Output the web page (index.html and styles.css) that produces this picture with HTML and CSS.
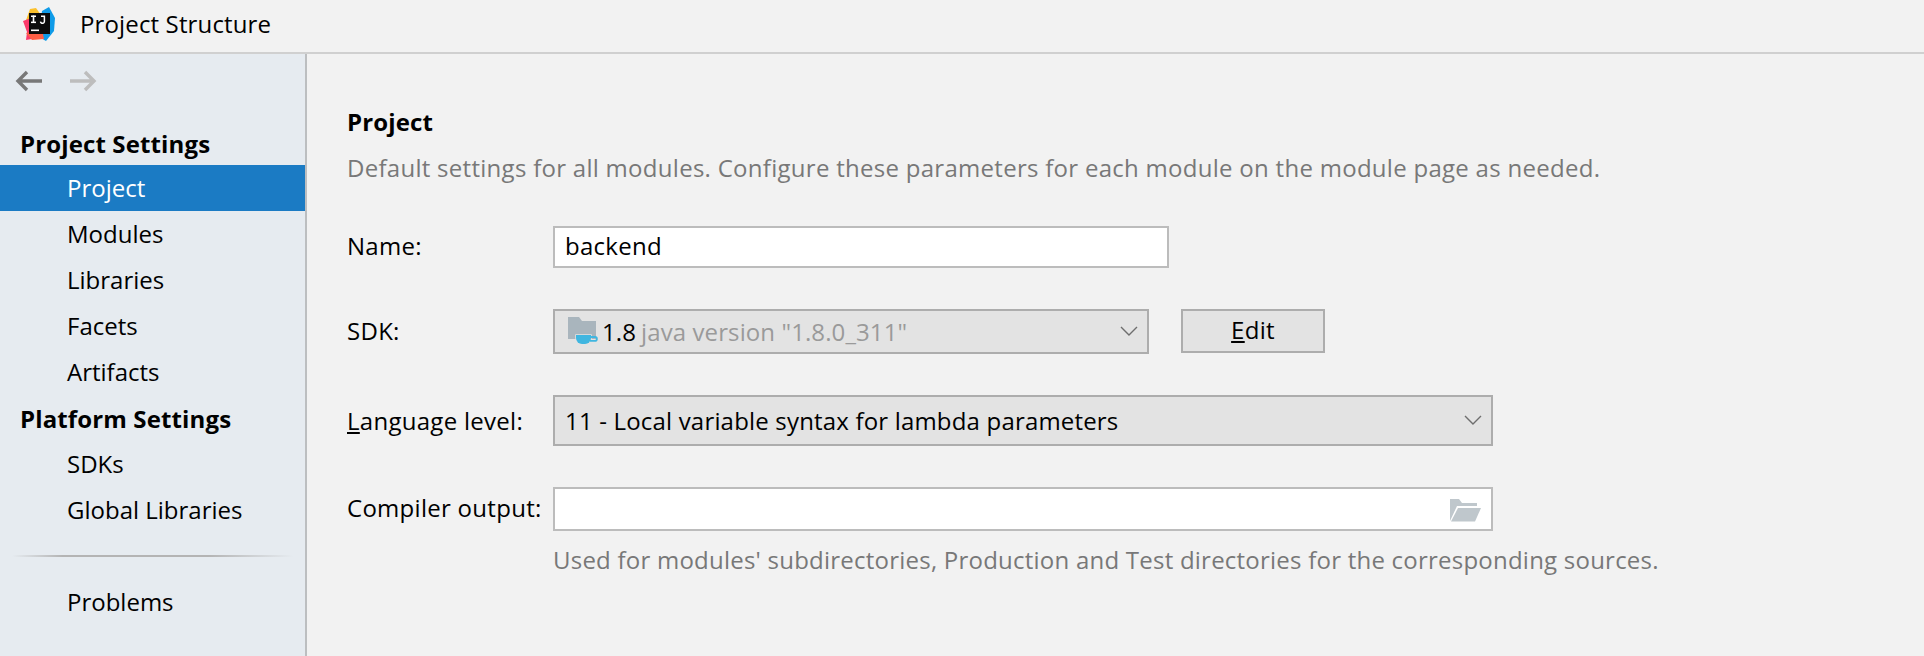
FILE: index.html
```html
<!DOCTYPE html>
<html lang="en">
<head>
<meta charset="utf-8">
<title>Project Structure</title>
<link rel="stylesheet" href="styles.css">
</head>
<body>
<div class="window">
  <header class="titlebar">
    <svg class="logo" width="34" height="34" viewBox="0 0 34 34">
      <polygon points="3,16 8,2 14,1 19,8 12,20" fill="#fcc12d"/>
      <polygon points="1,14 9,11 12,24 10,32 4,33 5,25" fill="#fb3a6b"/>
      <polygon points="20,4 27,0 33,11 32,24 24,34 17,30" fill="#0f9be8"/>
      <polygon points="4,26 20,22 22,32 10,33" fill="#fe5f45"/>
      <rect x="7" y="6" width="21" height="21" fill="#0c0c0c"/>
      <rect x="9" y="22.500" width="8" height="1.600" fill="#fff"/>
      <rect x="9" y="8.500" width="5" height="1.500" fill="#fff"/>
      <rect x="10.700" y="8.500" width="1.600" height="7.500" fill="#fff"/>
      <rect x="9" y="14.600" width="5" height="1.500" fill="#fff"/>
      <path d="M19 9.200h3.400v5a1.900 1.900 0 0 1-3.900.4" stroke="#fff" stroke-width="1.500" fill="none"/>
    </svg>
    <span class="title">Project Structure</span>
  </header>
  <div class="body">
    <nav class="sidebar">
      <div class="arrows">
        <svg width="28" height="22" viewBox="0 0 28 22" fill="none" stroke="#787878" stroke-width="3.400"><path d="M27 11H3M12 2 3 11l9 9"/></svg>
        <svg width="28" height="22" viewBox="0 0 28 22" fill="none" stroke="#bdbdbd" stroke-width="3.400"><path d="M1 11h24M16 2l9 9-9 9"/></svg>
      </div>
      <div class="section section-first">Project Settings</div>
      <div class="item selected">Project</div>
      <div class="item">Modules</div>
      <div class="item">Libraries</div>
      <div class="item">Facets</div>
      <div class="item">Artifacts</div>
      <div class="section section-next">Platform Settings</div>
      <div class="item">SDKs</div>
      <div class="item">Global Libraries</div>
      <div class="separator"></div>
      <div class="item">Problems</div>
    </nav>
    <main class="content">
      <h1 class="heading">Project</h1>
      <p class="muted desc">Default settings for all modules. Configure these parameters for each module on the module page as needed.</p>
      <div class="row row-name">
        <label class="label">Name:</label>
        <div class="field name-field">backend</div>
      </div>
      <div class="row row-sdk">
        <label class="label">SDK:</label>
        <div class="combo sdk-combo">
          <svg class="sdk-icon" width="31" height="29" viewBox="0 0 31 29">
            <path d="M0 0h11l3 4h14v18H0z" fill="#a9b5bd"/>
            <path d="M8 18h15v3a6 6 0 0 1-6 6h-3a6 6 0 0 1-6-6z" fill="#40b6e0" stroke="#e3e3e3" stroke-width="1.500" paint-order="stroke"/>
            <path d="M23 20h4a1.800 1.800 0 0 1 0 3.800h-5" fill="none" stroke="#40b6e0" stroke-width="1.800"/>
          </svg>
          <span class="sdk-ver">1.8</span>
          <span class="sdk-name">java version "1.8.0_311"</span>
          <svg class="chevron" width="18" height="10" viewBox="0 0 18 10" fill="none" stroke="#6e6e6e" stroke-width="1.400"><path d="M1 1 9 9l8-8"/></svg>
        </div>
        <button class="edit"><u>E</u>dit</button>
      </div>
      <div class="row row-lang">
        <label class="label"><u>L</u>anguage level:</label>
        <div class="combo lang-combo">
          <span>11 - Local variable syntax for lambda parameters</span>
          <svg class="chevron" width="18" height="10" viewBox="0 0 18 10" fill="none" stroke="#6e6e6e" stroke-width="1.400"><path d="M1 1 9 9l8-8"/></svg>
        </div>
      </div>
      <div class="row row-out">
        <label class="label label-out">Compiler output:</label>
        <div class="field out-field">
          <svg class="open-icon" width="31" height="23" viewBox="0 0 31 23"><path d="M0 22V0h9l3 4h15v3H7z" fill="#bfc7cc"/><path d="M8 9h23l-6 13.500H1z" fill="#bfc7cc"/></svg>
        </div>
      </div>
      <p class="muted help">Used for modules' subdirectories, Production and Test directories for the corresponding sources.</p>
    </main>
  </div>
</div>
</body>
</html>
```
FILE: styles.css
```css
* { box-sizing: border-box; }
html, body { margin: 0; height: 100%; }
body { font-family: "Open Sans", "Noto Sans", sans-serif; font-size: 24px; letter-spacing: 0.28px; color: #000; background: #f2f2f2; overflow: hidden; }
.window { width: 1924px; height: 656px; display: flex; flex-direction: column; }
.titlebar { height: 54px; flex: none; display: flex; align-items: center; background: #f2f2f2; border-bottom: 2px solid #d0d0d0; padding: 0 0 2px 22px; }
.logo { flex: none; margin-bottom: 3px; }
.title { margin-left: 24px; margin-bottom: 3px; letter-spacing: 0.14px; }
.body { flex: 1; display: flex; min-height: 0; }
.sidebar { width: 307px; flex: none; background: #e6ebf0; border-right: 2px solid #bcbec0; }
.arrows { height: 58px; display: flex; align-items: center; gap: 26px; padding: 0 0 4px 15px; }
.section { padding-left: 20px; font-weight: 700; letter-spacing: 0.13px; }
.section-first { height: 53px; line-height: 64px; }
.section-next { height: 46px; line-height: 48px; }
.item { height: 46px; line-height: 46px; padding-left: 67px; letter-spacing: 0; }
.selected { background: #1b7bc4; color: #fff; }
.separator { height: 2px; margin: 22px 12px 22px; background: linear-gradient(90deg, transparent, #b4b4b4 18%, #b4b4b4 70%, transparent); }
.content { flex: 1; padding-left: 40px; }
.heading { margin: 50px 0 0; height: 36px; line-height: 36px; font-size: 24px; font-weight: 700; letter-spacing: 0.13px; }
.muted { color: #787878; margin: 0; }
.desc { margin-top: 9px; height: 38px; line-height: 38px; }
.row { display: flex; align-items: center; }
.label { width: 206px; flex: none; }
.field { background: #fff; border: 2px solid #bcbcbc; }
.row-name { margin-top: 39px; height: 42px; }
.row-name .label { margin-bottom: 3px; }
.name-field { width: 616px; height: 42px; line-height: 35px; padding-left: 10px; }
.combo { background: #e3e3e3; border: 2px solid #adadad; display: flex; align-items: center; position: relative; }
.row-sdk { margin-top: 41px; height: 45px; align-items: flex-start; }
.row-sdk .label { line-height: 43px; }
.sdk-combo { width: 596px; height: 45px; padding-left: 13px; letter-spacing: 0.1px; }
.sdk-icon { flex: none; margin-right: 3px; }
.sdk-ver { margin-bottom: 1px; }
.sdk-name { color: #9a9a9a; margin-left: 5px; margin-bottom: 1px; }
.chevron { position: absolute; right: 9px; top: 50%; margin-top: -6px; }
.edit { width: 144px; height: 44px; margin-left: 32px; font: inherit; letter-spacing: inherit; color: #000; background: #e3e3e3; border: 2px solid #adadad; padding: 0 0 3px; }
.row-lang { margin-top: 41px; height: 51px; }
.lang-combo { width: 940px; height: 51px; padding-left: 10px; letter-spacing: 0.18px; }
.row-out { margin-top: 41px; height: 44px; }
.label-out { margin-bottom: 3px; }
.out-field { width: 940px; height: 44px; position: relative; }
.open-icon { position: absolute; right: 10px; top: 10px; }
.help { margin-top: 11px; padding-left: 206px; line-height: 36px; letter-spacing: 0.23px; }
```
